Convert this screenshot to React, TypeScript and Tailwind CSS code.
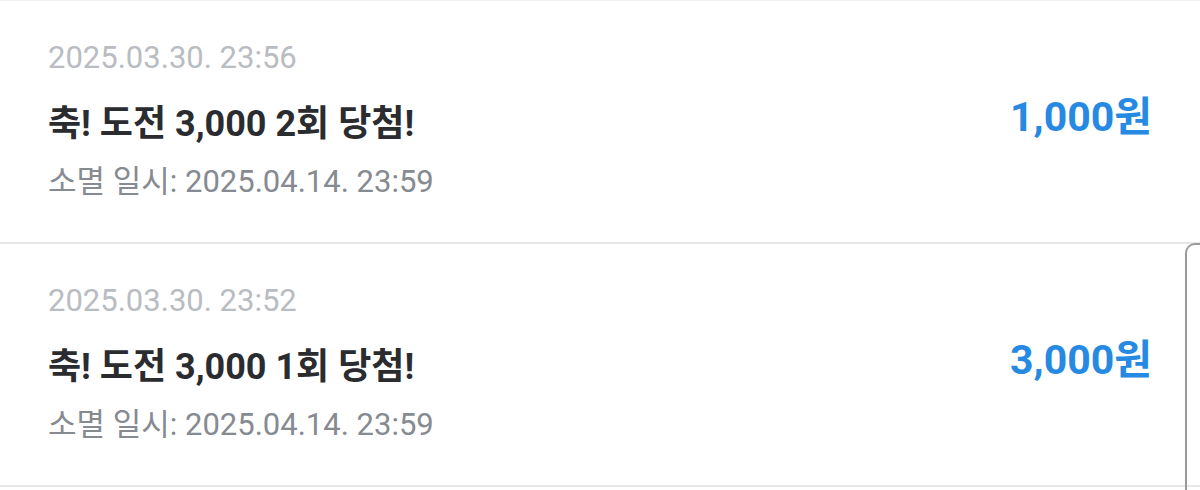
import React from "react";

const items = [
  { date: "2025.03.30. 23:56", title: "축! 도전 3,000 2회 당첨!", expire: "소멸 일시: 2025.04.14. 23:59", amount: "1,000원" },
  { date: "2025.03.30. 23:52", title: "축! 도전 3,000 1회 당첨!", expire: "소멸 일시: 2025.04.14. 23:59", amount: "3,000원" },
];

export default function App() {
  return (
    <div
      className="relative w-[1200px] h-[490px] overflow-hidden bg-white"
      style={{ fontFamily: "Roboto, 'Noto Sans CJK KR', sans-serif" }}
    >
      <div className="h-px bg-[#f2f2f3]" />
      {items.map((it, i) => (
        <div key={i}>
          <div className="flex h-[241px] items-center justify-between pl-[48px] pr-[48px]">
            <div className="flex flex-col pb-[4px]">
              <div className="text-[31px] leading-[40px] text-[#b9bcc1]">{it.date}</div>
              <div className="mt-[26px] text-[36px] font-bold leading-[40px] text-[#2a2c30]">{it.title}</div>
              <div className="mt-[18px] text-[31px] leading-[40px] text-[#868a91]">{it.expire}</div>
            </div>
            <div className="mb-[9px] text-[41px] font-bold leading-[50px] text-[#2689e2]">{it.amount}</div>
          </div>
          <div className="h-[2px] bg-[#e6e7e9]" />
        </div>
      ))}
      <div className="absolute left-[1185px] top-[243px] h-[300px] w-[40px] rounded-tl-[10px] border-l-2 border-t-2 border-[#9a9a9a]" />
    </div>
  );
}
